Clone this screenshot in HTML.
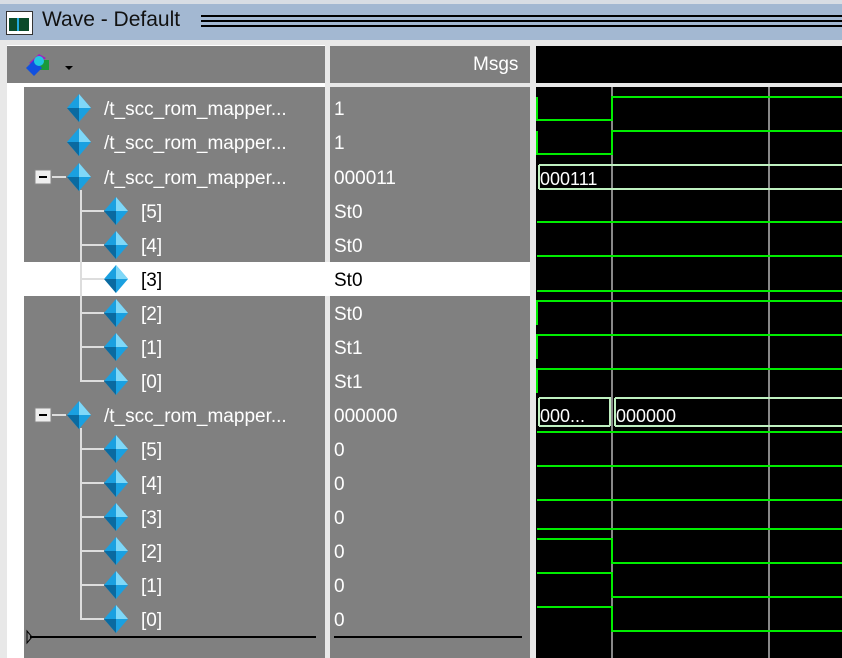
<!DOCTYPE html>
<html><head><style>
body{margin:0;width:842px;height:658px;overflow:hidden;background:#a9bdd4;font-family:"Liberation Sans",sans-serif;position:relative}
.a{position:absolute}
.t{position:absolute;font-size:19px;color:#fff;line-height:34px;white-space:nowrap;margin-top:2px}
</style></head><body>
<div class="a" style="left:0;top:0;width:842px;height:4px;background:#d8dde4"></div>
<div class="a" style="left:0;top:4px;width:842px;height:36px;background:#a3b8d2"></div>
<div class="a" style="left:6px;top:11px;width:25px;height:22px;background:#fff;border:1px solid #333"><div class="a" style="left:2px;top:6px;width:20px;height:13px;background:#0a4a2a"></div><div class="a" style="left:10px;top:6px;width:2px;height:13px;background:#2ad"></div></div>
<div class="a" style="left:42px;top:8px;font-size:21px;color:#111">Wave - Default</div>
<div class="a" style="left:201px;top:15px;width:641px;height:2px;background:#000"></div>
<div class="a" style="left:201px;top:20px;width:641px;height:2px;background:#000"></div>
<div class="a" style="left:201px;top:25px;width:641px;height:2px;background:#000"></div>
<div class="a" style="left:0;top:40px;width:842px;height:618px;background:#e8e8e8"></div>
<div class="a" style="left:7px;top:45px;width:318px;height:613px;background:#fff"></div>
<div class="a" style="left:7px;top:46px;width:318px;height:37px;background:#7f7f7f"></div>
<div class="a" style="left:24px;top:87px;width:301px;height:571px;background:#808080"></div>
<div class="a" style="left:330px;top:46px;width:200px;height:37px;background:#7f7f7f"></div>
<div class="a" style="left:330px;top:87px;width:200px;height:571px;background:#808080"></div>
<div class="a" style="left:536px;top:46px;width:306px;height:37px;background:#000"></div>
<div class="a" style="left:536px;top:87px;width:306px;height:571px;background:#000"></div>
<div class="a" style="left:24px;top:262px;width:506px;height:34px;background:#fff"></div>
<div class="a" style="left:473px;top:54px;font-size:19px;color:#fff">Msgs</div>
<svg class="a" style="left:24px;top:46px" width="60" height="36"><path d="M5 17 L15 8 L22 12 L12 20Z" fill="#a020c0"/><rect x="14" y="14" width="11" height="10" fill="#1a9a3a"/><path d="M2 22 L10 14 L18 22 L10 30Z" fill="#1050e0"/><circle cx="15" cy="15" r="5" fill="#20c8e0"/><path d="M41 20 h8 l-4 4z" fill="#000"/></svg>
<svg class="a" style="left:0;top:0" width="842" height="658">
<defs><g id="d"><path d="M0 -14 L12 0 L0 14 L-12 0Z" fill="#1aa0e0"/><path d="M0 -14 L12 0 L0 0Z" fill="#7fd8f8"/><path d="M0 14 L-12 0 L0 0Z" fill="#0a6aa0"/></g></defs>
<g stroke="#ddd" stroke-width="2" fill="none">
<path d="M81 190 V381 H104 M81 211 H104 M81 245 H104 M81 279 H104 M81 313 H104 M81 347 H104"/>
<path d="M81 428 V619 H104 M81 449 H104 M81 483 H104 M81 517 H104 M81 551 H104 M81 585 H104"/>
<path d="M52 177 H66 M52 415 H66"/>
</g>
<rect x="35" y="170" width="16" height="14" fill="#eee" stroke="#888"/><path d="M39 177 H47" stroke="#000" stroke-width="2"/>
<rect x="35" y="408" width="16" height="14" fill="#eee" stroke="#888"/><path d="M39 415 H47" stroke="#000" stroke-width="2"/>
<use href="#d" x="79" y="108"/><use href="#d" x="79" y="142"/><use href="#d" x="79" y="177"/><use href="#d" x="79" y="415"/>
<use href="#d" x="116" y="211"/><use href="#d" x="116" y="245"/><use href="#d" x="116" y="279"/><use href="#d" x="116" y="313"/><use href="#d" x="116" y="347"/><use href="#d" x="116" y="381"/>
<use href="#d" x="116" y="449"/><use href="#d" x="116" y="483"/><use href="#d" x="116" y="517"/><use href="#d" x="116" y="551"/><use href="#d" x="116" y="585"/><use href="#d" x="116" y="619"/>
<path d="M30 637 H316 M334 637 H522" stroke="#000" stroke-width="2"/><path d="M27 631 L32 637 L27 643Z" fill="none" stroke="#000"/>
<g stroke="#888" stroke-width="2"><path d="M612 87 V658 M769 87 V658"/></g>
<g stroke="#00ee00" stroke-width="2" fill="none">
<path d="M537 97 V120 H612 V97 H842"/>
<path d="M537 131 V154 H612 V131 H842"/>
<path d="M537 222 H842 M537 256 H842 M537 291 H842"/>
<path d="M537 325 V301 H842 M537 359 V335 H842 M537 393 V369 H842"/>
<path d="M537 432 H842 M537 466 H842 M537 500 H842 M537 529 H842"/>
<path d="M537 539 H612 V563 H842 M537 573 H612 V597 H842 M537 607 H612 V631 H842"/>
</g>
<g stroke="#bff0c0" stroke-width="2" fill="none">
<path d="M539 165 H842 M539 189 H842 M539 165 V189"/>
<path d="M539 398 V426 M539 398 H610 V426 M539 426 H610 M615 398 V426 M615 398 H842 M615 426 H842"/>
</g>
<g font-family="Liberation Sans" font-size="18" fill="#fff"><text x="540" y="185">000111</text><text x="540" y="422">000...</text><text x="616" y="422">000000</text></g>
</svg>
<div class="t" style="left:104px;top:91px">/t_scc_rom_mapper...</div>
<div class="t" style="left:104px;top:125px">/t_scc_rom_mapper...</div>
<div class="t" style="left:104px;top:160px">/t_scc_rom_mapper...</div>
<div class="t" style="left:141px;top:194px">[5]</div>
<div class="t" style="left:141px;top:228px">[4]</div>
<div class="t" style="left:141px;top:262px;color:#000">[3]</div>
<div class="t" style="left:141px;top:296px">[2]</div>
<div class="t" style="left:141px;top:330px">[1]</div>
<div class="t" style="left:141px;top:364px">[0]</div>
<div class="t" style="left:104px;top:398px">/t_scc_rom_mapper...</div>
<div class="t" style="left:141px;top:432px">[5]</div>
<div class="t" style="left:141px;top:466px">[4]</div>
<div class="t" style="left:141px;top:500px">[3]</div>
<div class="t" style="left:141px;top:534px">[2]</div>
<div class="t" style="left:141px;top:568px">[1]</div>
<div class="t" style="left:141px;top:602px">[0]</div>
<div class="t" style="left:334px;top:91px">1</div>
<div class="t" style="left:334px;top:125px">1</div>
<div class="t" style="left:334px;top:160px">000011</div>
<div class="t" style="left:334px;top:194px">St0</div>
<div class="t" style="left:334px;top:228px">St0</div>
<div class="t" style="left:334px;top:262px;color:#000">St0</div>
<div class="t" style="left:334px;top:296px">St0</div>
<div class="t" style="left:334px;top:330px">St1</div>
<div class="t" style="left:334px;top:364px">St1</div>
<div class="t" style="left:334px;top:398px">000000</div>
<div class="t" style="left:334px;top:432px">0</div>
<div class="t" style="left:334px;top:466px">0</div>
<div class="t" style="left:334px;top:500px">0</div>
<div class="t" style="left:334px;top:534px">0</div>
<div class="t" style="left:334px;top:568px">0</div>
<div class="t" style="left:334px;top:602px">0</div>
</body></html>
